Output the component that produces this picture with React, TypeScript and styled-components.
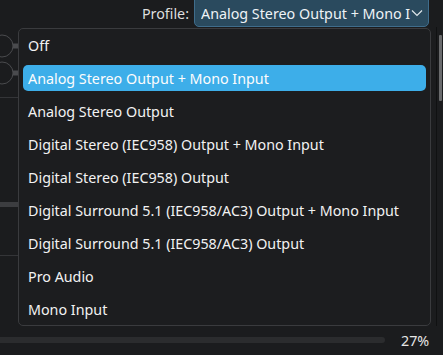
import React from "react";
import styled, { createGlobalStyle } from "styled-components";

const Global = createGlobalStyle`
  html, body { margin: 0; padding: 0; background: #1b1c1e; }
  body { font-family: "Noto Sans", "DejaVu Sans", sans-serif; }
`;

const Screen = styled.div`
  position: relative;
  width: 443px;
  height: 355px;
  overflow: hidden;
  background: #1b1c1e;
  color: #fcfcfc;
  font-size: 14.3px;
  display: flex;
  flex-direction: column;
`;

const TopBar = styled.div`
  height: 27px;
  display: flex;
  align-items: center;
  justify-content: flex-end;
  gap: 5px;
  padding-right: 14px;
`;

const Label = styled.span`
  color: #dedede;
  line-height: 20px;
`;

const Combo = styled.div`
  box-sizing: border-box;
  width: 235px;
  height: 29px;
  margin-top: -2px;
  background: #2a4a5e;
  border: 1px solid #3f6d8c;
  border-radius: 0 0 5px 5px;
  display: flex;
  align-items: center;
  padding: 1px 5px 0 6px;
  gap: 0px;
`;

const ComboText = styled.span`
  flex: 1;
  white-space: nowrap;
  overflow: hidden;
  color: #eef3f6;
`;

const Body = styled.div`
  flex: 1;
  display: flex;
`;

const LeftStrip = styled.div`
  width: 18px;
  display: flex;
  flex-direction: column;
  padding-top: 5px;
`;

const Node = styled.div`
  height: 27px;
  display: flex;
  align-items: center;
`;

const Rule = styled.div<{ $h: number; $c: string; $mt: number }>`
  height: ${(p) => p.$h}px;
  background: ${(p) => p.$c};
  margin-top: ${(p) => p.$mt}px;
`;

const RightEdge = styled.div`
  margin-left: auto;
  width: 6px;
  border-left: 1px solid #101112;
  display: flex;
  flex-direction: column;
  padding-top: 8px;
`;

const ScrollThumb = styled.div`
  margin-left: 2px;
  width: 3px;
  height: 66px;
  background: #6a6b6d;
  border-radius: 1px;
`;

const BottomRow = styled.div`
  height: 28px;
  display: flex;
  align-items: center;
  padding-bottom: 1px;
`;

const Progress = styled.div`
  width: 385px;
  height: 6px;
  background: #2b2c2e;
  border-radius: 0 3px 3px 0;
`;

const Percent = styled.span`
  margin-left: 16px;
  color: #e6e6e6;
`;

const Popup = styled.div`
  position: absolute;
  left: 18px;
  top: 28px;
  width: 413px;
  height: 298px;
  box-sizing: border-box;
  background: #1c1d1f;
  border: 1px solid #3a3b3e;
  border-radius: 5px;
  padding: 3px 4px;
  display: flex;
  flex-direction: column;
  gap: 7px;
`;

const Item = styled.div<{ $active?: boolean }>`
  height: 26px;
  flex: none;
  box-sizing: border-box;
  display: flex;
  align-items: center;
  padding-left: 5px;
  border-radius: 5px;
  white-space: nowrap;
  color: ${(p) => (p.$active ? "#fcfcfc" : "#f2f2f2")};
  background: ${(p) => (p.$active ? "#3daee9" : "transparent")};
`;

const items = [
  "Off",
  "Analog Stereo Output + Mono Input",
  "Analog Stereo Output",
  "Digital Stereo (IEC958) Output + Mono Input",
  "Digital Stereo (IEC958) Output",
  "Digital Surround 5.1 (IEC958/AC3) Output + Mono Input",
  "Digital Surround 5.1 (IEC958/AC3) Output",
  "Pro Audio",
  "Mono Input",
];

const PortNode = () => (
  <svg width="18" height="24" viewBox="0 0 18 24">
    <circle cx="2" cy="12" r="11" fill="none" stroke="#4a4b4e" strokeWidth="1" />
    <rect x="13" y="9.5" width="5" height="5" fill="#4a4b4e" />
  </svg>
);

const Chevron = () => (
  <svg width="12" height="8" viewBox="0 0 12 8">
    <path d="M1 1.5 L6 6.5 L11 1.5" fill="none" stroke="#dfe6ea" strokeWidth="1.2" />
  </svg>
);

export default function App() {
  return (
    <>
      <Global />
      <Screen>
        <TopBar>
          <Label>Profile:</Label>
          <Combo>
            <ComboText>Analog Stereo Output + Mono Input</ComboText>
            <Chevron />
          </Combo>
        </TopBar>
        <Body>
          <LeftStrip>
            <Node>
              <PortNode />
            </Node>
            <Node>
              <PortNode />
            </Node>
            <Rule $h={1} $c="#343538" $mt={11} />
            <Rule $h={5} $c="#3c3d40" $mt={104} />
            <Rule $h={1} $c="#343538" $mt={48} />
          </LeftStrip>
          <RightEdge>
            <ScrollThumb />
          </RightEdge>
        </Body>
        <BottomRow>
          <Progress />
          <Percent>27%</Percent>
        </BottomRow>
        <Popup>
          {items.map((t, i) => (
            <Item key={t} $active={i === 1}>
              {t}
            </Item>
          ))}
        </Popup>
      </Screen>
    </>
  );
}
